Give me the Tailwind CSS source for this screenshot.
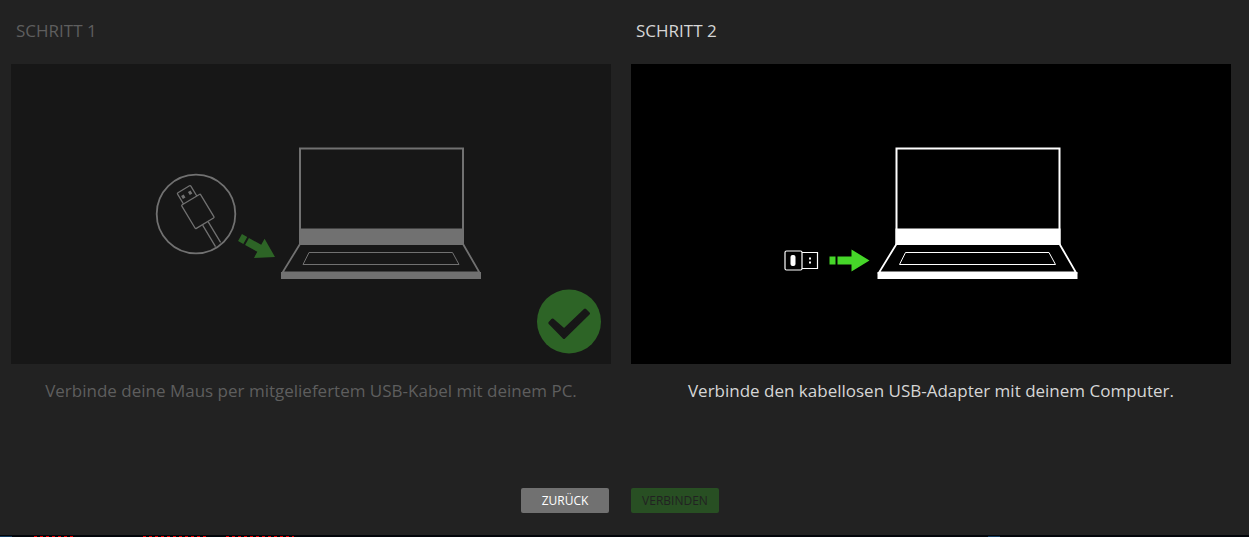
<!DOCTYPE html>
<html lang="de">
<head>
<meta charset="utf-8">
<meta name="viewport" content="width=device-width, initial-scale=1">
<title>Maus verbinden</title>
<script src="https://cdn.jsdelivr.net/npm/@tailwindcss/browser@4"></script>
</head>
<body class="min-h-screen flex flex-col bg-[#222222] font-['Segoe_UI','Open_Sans',sans-serif]">
<main class="flex-1 flex flex-col pt-[15px] pl-[11px] pr-[18px]">
  <div class="grid grid-cols-2 gap-5 text-[17px]">
    <section class="text-[#5e5e5e]">
      <h2 class="h-8 leading-8 mb-[17px] pl-[5px]">SCHRITT 1</h2>
      <svg class="block w-full bg-[#171717] text-[#717171]" viewBox="0 0 600 300" fill="none" stroke="currentColor" role="img" aria-label="USB-Kabel mit dem Laptop verbinden">
        <defs>
          <g id="laptop">
            <path d="M19 98V1.500H182V98" stroke-width="2"/>
            <path d="M18 81.500H183V98H18z" fill="currentColor" stroke="none"/>
            <path d="M19 97L1.500 125.500H198.500L182 97" stroke-width="1.800"/>
            <path d="M0 125H200V132H0z" fill="currentColor" stroke="none"/>
            <path d="M28 105.500H171.500L178 117.500H22z"/>
          </g>
        </defs>
        <use href="#laptop" x="270" y="83"/>
        <circle cx="185" cy="150" r="39.300" stroke-width="1.800"/>
        <g transform="translate(187 147.600) rotate(-31)" stroke-width="1.300">
          <path d="M-8.500 -14V-25.500Q-8.500 -26.500 -7.500 -26.500H6Q7 -26.500 7 -25.500V-14"/>
          <path d="M-10 -14H10Q11 -14 11 -13V12.500Q11 13.500 10 13.500H-10Q-11 13.500 -11 12.500V-13Q-11 -14 -10 -14z"/>
          <path d="M-3 14V39M3.500 14V38"/>
          <path d="M-6.500 -22h3v3.500h-3zM1.500 -22h3v3.500h-3z" fill="currentColor" stroke="none"/>
        </g>
        <g transform="translate(264 193) rotate(29)" fill="#2d6426" stroke="none">
          <path d="M-40 -4H-34V4H-40zM-32 -4H-18V-11L0 0L-18 11V4H-32z"/>
        </g>
        <circle cx="558" cy="257.500" r="32" fill="#2d6426" stroke="none"/>
        <path d="M541.500 256L538.800 259L553 273.500L577.500 249.500L574 246L553 266z" fill="#171717" stroke="#171717" stroke-width="3" stroke-linejoin="round"/>
      </svg>
      <p class="mt-3.5 text-center">Verbinde deine Maus per mitgeliefertem USB-Kabel mit deinem PC.</p>
    </section>
    <section class="text-[#d6d6d6]">
      <h2 class="h-8 leading-8 mb-[17px] pl-[5px]">SCHRITT 2</h2>
      <svg class="block w-full bg-black text-white" viewBox="0 0 600 300" fill="none" stroke="currentColor" role="img" aria-label="USB-Adapter mit dem Laptop verbinden">
        <use href="#laptop" x="246.500" y="83"/>
        <rect x="154" y="187" width="17" height="19" rx="1.500" stroke-width="1.200"/>
        <path d="M171 188.500H186.500V204.500H171" stroke-width="1.200"/>
        <rect x="159.500" y="191" width="5" height="11" rx="2" fill="currentColor" stroke="none"/>
        <path d="M178 193.500h2v2h-2zM178 197.500h2v2h-2z" fill="currentColor" stroke="none"/>
        <path d="M198.500 192.500H204.500V200.500H198.500zM206.500 192.500H220.500V185.500L238.500 196.500L220.500 207.500V200.500H206.500z" fill="#46d629" stroke="none"/>
      </svg>
      <p class="mt-3.5 text-center">Verbinde den kabellosen USB-Adapter mit deinem Computer.</p>
    </section>
  </div>
  <div class="mt-auto mb-[22px] flex justify-center gap-[22px] pr-0.5 text-xs">
    <button type="button" class="w-22 h-[25px] rounded-xs bg-[#717171] text-white">ZURÜCK</button>
    <button type="button" disabled class="w-22 h-[25px] rounded-xs bg-[#284f23] text-[#222222]">VERBINDEN</button>
  </div>
</main>
<svg class="block w-full h-0.5 bg-[#02050a]" fill="none" aria-hidden="true">
  <path d="M0 1.500H12M988 1.500H1000" stroke="#12395c"/>
  <path d="M34 1.500H74M143 1.500H206M226 1.500H294" stroke="#f00000" stroke-dasharray="3 3"/>
</svg>
</body>
</html>
